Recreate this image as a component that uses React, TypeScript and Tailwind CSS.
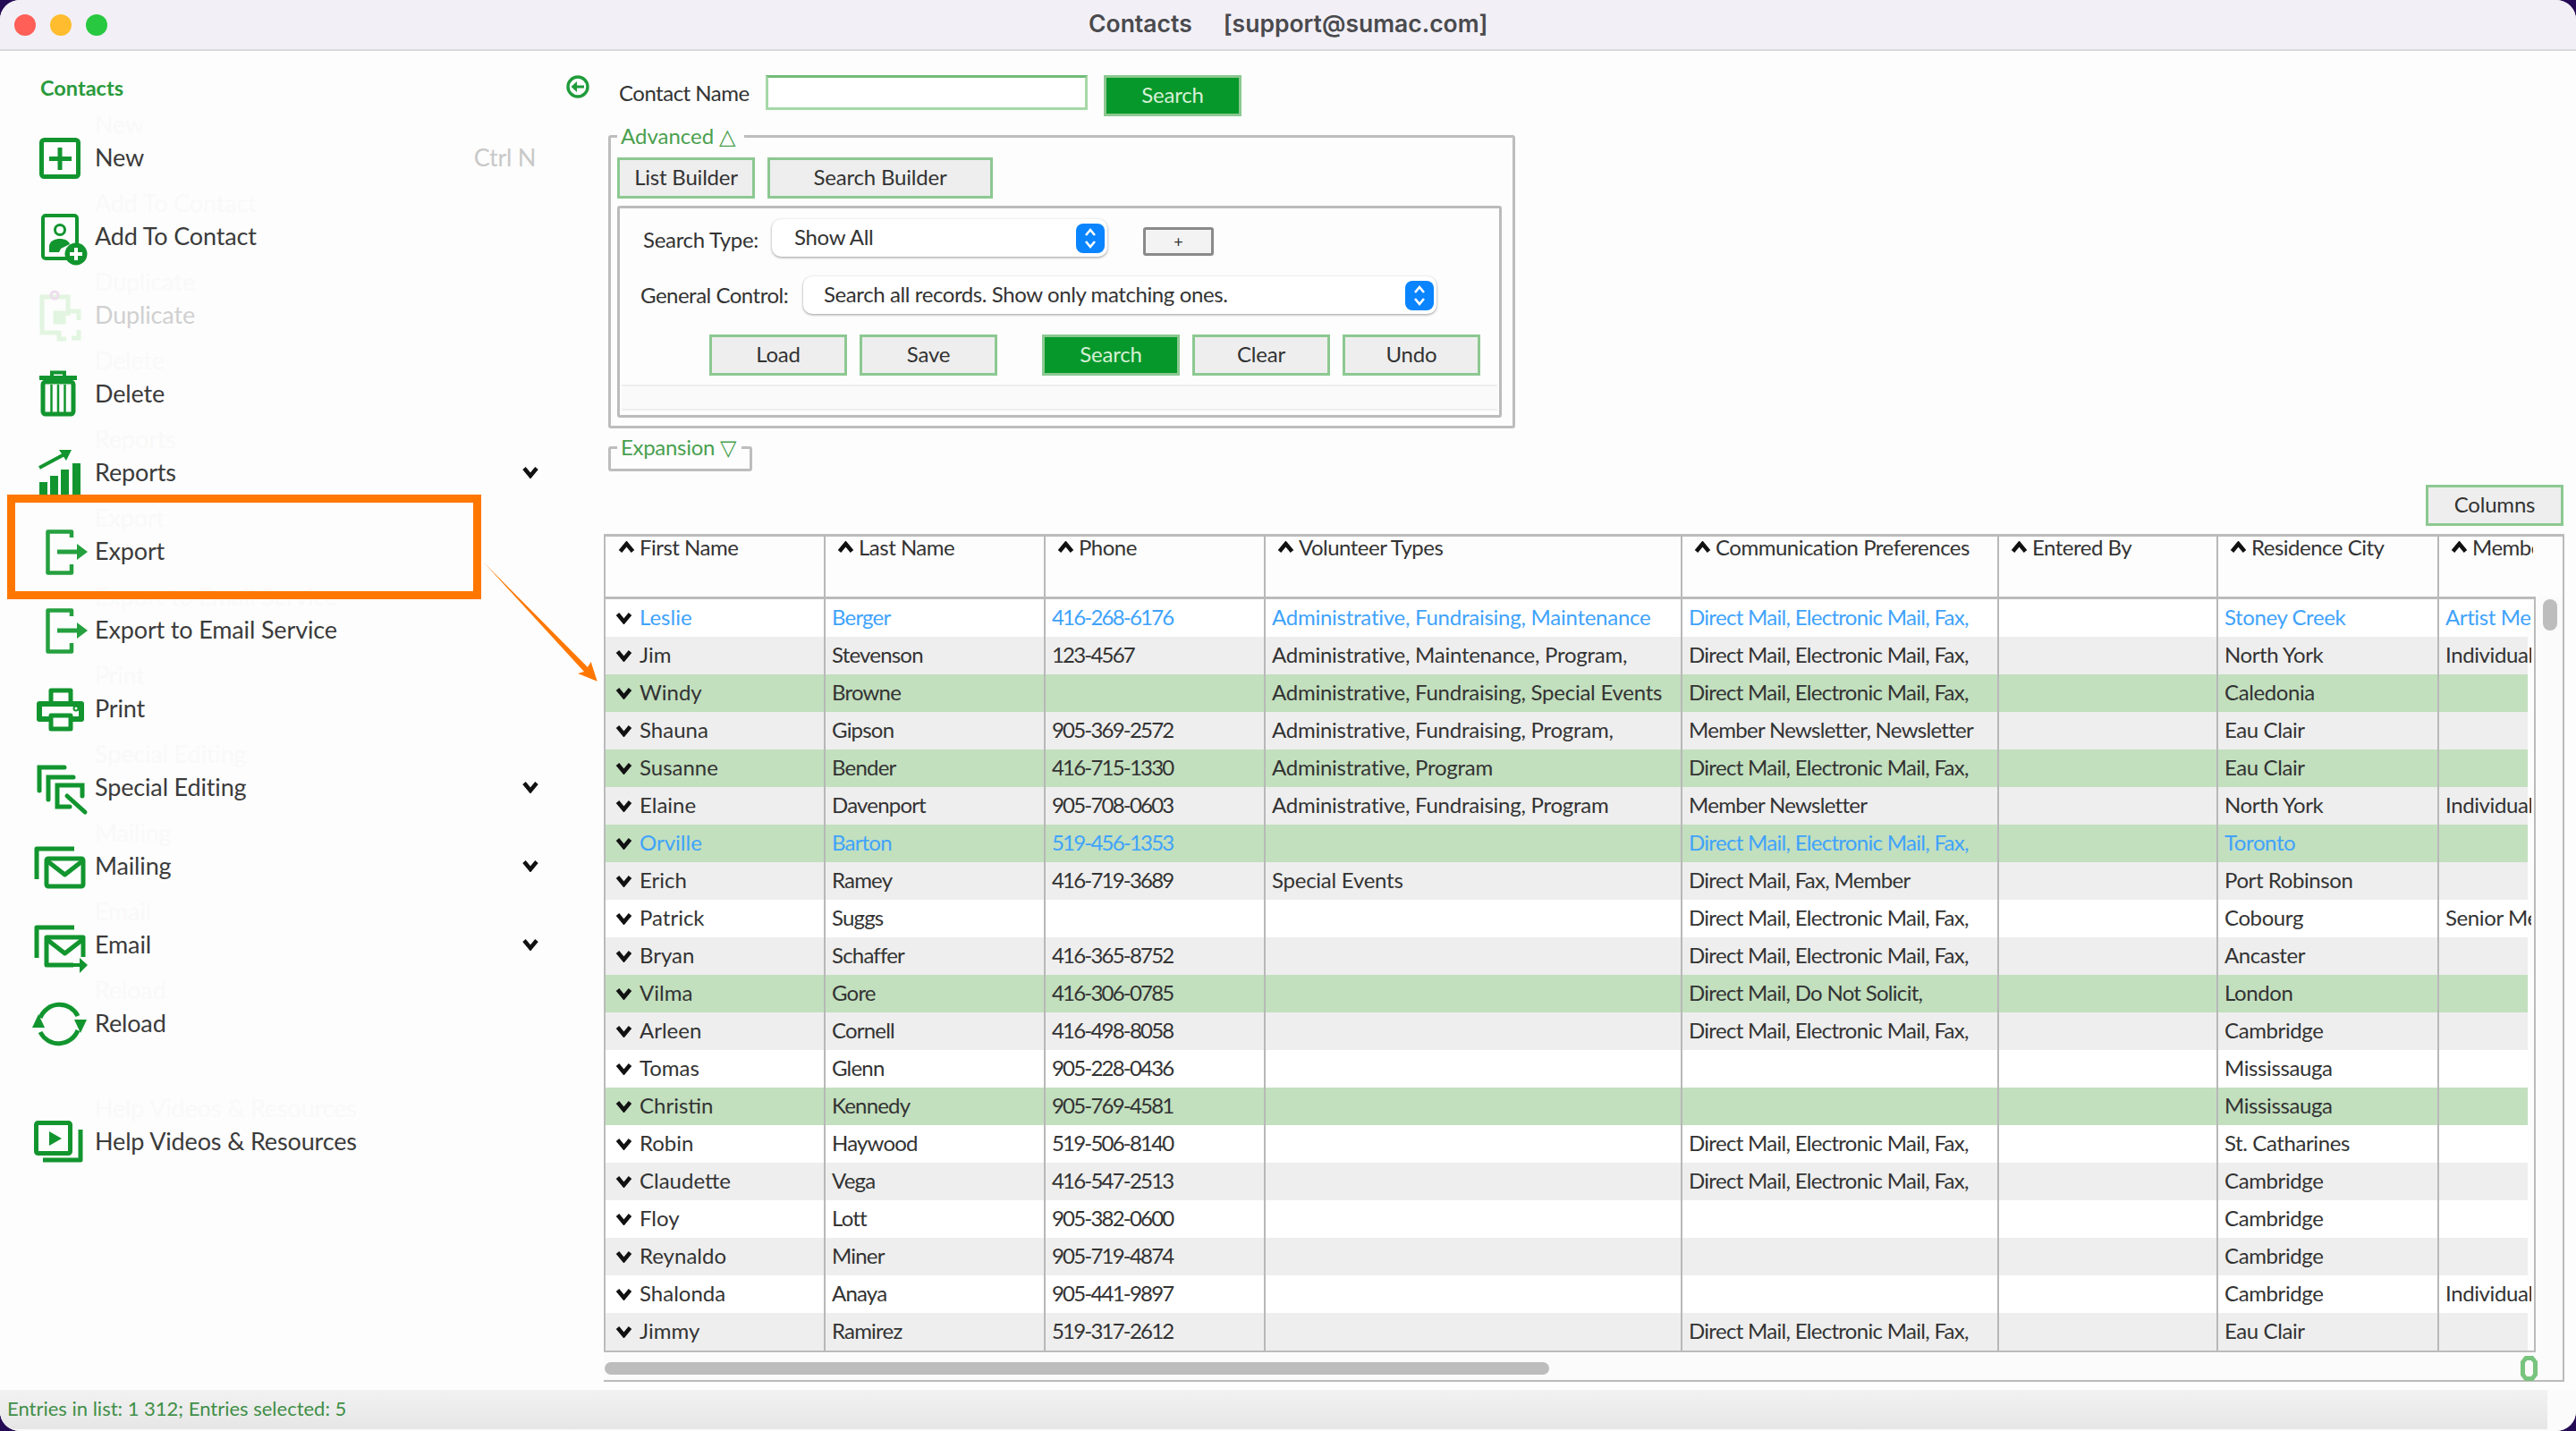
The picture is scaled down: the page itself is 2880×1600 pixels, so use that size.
import React from "react";

const G = "#12952f";
const L = "#25a03f";

const Chev = ({ cls = "w-[19px] h-[14px]" }: { cls?: string }) => (
  <svg viewBox="0 0 19 14" className={cls + " shrink-0"}>
    <path d="M2.5 2.5 L9.5 11 L16.5 2.5" fill="none" stroke="#111" strokeWidth="4.5" />
  </svg>
);
const ChevUp = () => (
  <svg viewBox="0 0 19 14" className="w-[19px] h-[14px] shrink-0">
    <path d="M2.5 11.5 L9.5 3 L16.5 11.5" fill="none" stroke="#111" strokeWidth="4.5" />
  </svg>
);

const Ico = ({ children }: { children: React.ReactNode }) => (
  <svg viewBox="0 0 100 64" className="w-[100px] h-[64px] shrink-0 overflow-visible">
    {children}
  </svg>
);

const icons: Record<string, React.ReactNode> = {
  New: (
    <g fill="none" stroke={G} strokeWidth="5">
      <rect x="46.5" y="12.5" width="41" height="41" rx="3" />
      <path d="M67 21v25M55 33.5h25" />
    </g>
  ),
  Add: (
    <g>
      <rect x="48" y="9" width="38" height="48" rx="3" fill="none" stroke={G} strokeWidth="4" />
      <circle cx="67" cy="25" r="5.5" fill="none" stroke={G} strokeWidth="3" />
      <path d="M55 50 V44 C55 37 62 35 67 35 C72 35 77 37 78 41 L68 46 L66 50 Z" fill={G} />
      <circle cx="85" cy="52" r="12.5" fill={G} />
      <path d="M85 45v14M78 52h14" stroke="#fff" strokeWidth="4" />
    </g>
  ),
  Dup: (
    <g fill="none" stroke="#e2f5e0" strokeWidth="5">
      <path d="M76 33 V12 H47 V52 H66" />
      <circle cx="61" cy="10" r="4" stroke="#eedded" strokeWidth="3" />
      <path d="M62 30 H71 V40 H62 Z" fill="#e2f5e0" />
      <path d="M78 28 H88 V38 M66 50 V59 H74 M88 49 V58 H80" />
    </g>
  ),
  Delete: (
    <g fill="none" stroke={G}>
      <path d="M44 14.5 H86" strokeWidth="5" />
      <path d="M58 13 V8.5 H72 V13" strokeWidth="4" />
      <rect x="48" y="19" width="34" height="36" rx="3" strokeWidth="5" />
      <path d="M57.5 22 V53 M65 22 V53 M72.5 22 V53" strokeWidth="2.5" />
    </g>
  ),
  Reports: (
    <g fill={G}>
      <rect x="44" y="43" width="9" height="20" />
      <rect x="56" y="36" width="9" height="27" />
      <rect x="68" y="29" width="9" height="34" />
      <rect x="81" y="22" width="9" height="41" />
      <path d="M44 27 L72 12" stroke={G} strokeWidth="4" fill="none" />
      <path d="M66 7 L80 7 L74 19 Z" />
    </g>
  ),
  Export: (
    <g fill="none" stroke={L} strokeWidth="4.5" strokeLinejoin="round">
      <path d="M80 17 V10.5 H53.5 V56.5 H80 V47" />
      <path d="M64 33 H88" strokeWidth="5" />
      <path d="M86 24 L98 33 L86 42 Z" fill={L} stroke="none" />
    </g>
  ),
  Print: (
    <g fill="none" stroke={G} strokeWidth="5" strokeLinejoin="round">
      <path d="M55 44 H44 V27 H91 V44 H80" strokeWidth="6" />
      <path d="M57 26 V12 H79 V26" />
      <rect x="57" y="40" width="22" height="15" />
      <circle cx="85" cy="32" r="1" />
    </g>
  ),
  Special: (
    <g fill="none" stroke={G} strokeWidth="5" strokeLinecap="round">
      <path d="M72 10 H44 V36" />
      <path d="M82 21 H54 V46" />
      <path d="M92 42 V30 H64 V54 H78" />
      <path d="M75 42 L95 60" strokeWidth="5" />
    </g>
  ),
  Mailing: (
    <g fill="none" stroke={G} strokeWidth="5" strokeLinejoin="round">
      <path d="M83 13 H41 V47" />
      <rect x="52" y="24" width="41" height="31" rx="2" />
      <path d="M52 26 L72.5 42 L93 26" />
    </g>
  ),
  Email: (
    <g fill="none" stroke={G} strokeWidth="5" strokeLinejoin="round">
      <path d="M83 13 H41 V47" />
      <path d="M82 55 H52 V24 H93 V46" />
      <path d="M52 26 L72.5 42 L93 26" />
      <path d="M74 55 H90" strokeWidth="4" />
      <path d="M89 47 L98 55 L89 64 Z" fill={G} stroke="none" />
    </g>
  ),
  Reload: (
    <g fill="none" stroke={G} strokeWidth="5">
      <path d="M45 26 A23 23 0 0 1 87 24" />
      <path d="M87 40 A23 23 0 0 1 45 42" />
      <path d="M36 37 L43 22 L50 37 Z" fill={G} stroke="none" />
      <path d="M83 28 L97 28 L90 43 Z" fill={G} stroke="none" />
    </g>
  ),
  Help: (
    <g fill="none" stroke={G} strokeWidth="5" strokeLinejoin="round">
      <rect x="40.5" y="11.5" width="38" height="34" rx="2" />
      <path d="M55 21 L69 29 L55 37 Z" fill={G} stroke="none" />
      <path d="M90 19 V53 H48" strokeWidth="5" />
    </g>
  ),
};

type Item = { label: string; icon: string; shortcut?: string; more?: boolean; off?: boolean; cls?: string };
const items: Item[] = [
  { label: "New", icon: "New", shortcut: "Ctrl N" },
  { label: "Add To Contact", icon: "Add" },
  { label: "Duplicate", icon: "Dup", off: true },
  { label: "Delete", icon: "Delete" },
  { label: "Reports", icon: "Reports", more: true },
  { label: "Export", icon: "Export" },
  { label: "Export to Email Service", icon: "Export" },
  { label: "Print", icon: "Print" },
  { label: "Special Editing", icon: "Special", more: true },
  { label: "Mailing", icon: "Mailing", more: true },
  { label: "Email", icon: "Email", more: true },
  { label: "Reload", icon: "Reload" },
  { label: "Help Videos & Resources", icon: "Help", cls: "mt-[44px]" },
];

const Btn = ({ children, w, primary }: { children: React.ReactNode; w: string; primary?: boolean }) => (
  <button
    className={
      w +
      " h-[46px] pb-[3px] border-[3px] border-[#8cc891] text-[24px] leading-none tracking-[-0.2px] " +
      (primary ? "bg-[#07982b] text-[#d6f0d6]" : "bg-[#eeeeee] text-[#333333]")
    }
  >
    {children}
  </button>
);

const Stepper = () => (
  <span className="ml-auto w-[32px] h-[33px] rounded-[8px] bg-[#0a84ff] flex items-center justify-center shrink-0">
    <svg viewBox="0 0 32 33" className="w-[32px] h-[33px]">
      <path d="M11 13 L16 7 L21 13 M11 20 L16 26 L21 20" fill="none" stroke="#fff" strokeWidth="2.6" />
    </svg>
  </span>
);

const DM = "Direct Mail, Electronic Mail, Fax,";
const AC = "Administrative, ";
type Row = [string, string, string, string, string, string, string, "w" | "g" | "s", boolean?];
const rows: Row[] = [
  ["Leslie", "Berger", "416-268-6176", "Administrative, Fundraising, Maintenance", DM, "Stoney Creek", "Artist Member", "w", true],
  ["Jim", "Stevenson", "123-4567", AC + "Maintenance, Program,", DM, "North York", "Individual", "g"],
  ["Windy", "Browne", "", AC + "Fundraising, Special Events", DM, "Caledonia", "", "s"],
  ["Shauna", "Gipson", "905-369-2572", AC + "Fundraising, Program,", "Member Newsletter, Newsletter", "Eau Clair", "", "g"],
  ["Susanne", "Bender", "416-715-1330", AC + "Program", DM, "Eau Clair", "", "s"],
  ["Elaine", "Davenport", "905-708-0603", AC + "Fundraising, Program", "Member Newsletter", "North York", "Individual", "g"],
  ["Orville", "Barton", "519-456-1353", "", DM, "Toronto", "", "s", true],
  ["Erich", "Ramey", "416-719-3689", "Special Events", "Direct Mail, Fax, Member", "Port Robinson", "", "g"],
  ["Patrick", "Suggs", "", "", DM, "Cobourg", "Senior Member", "w"],
  ["Bryan", "Schaffer", "416-365-8752", "", DM, "Ancaster", "", "g"],
  ["Vilma", "Gore", "416-306-0785", "", "Direct Mail, Do Not Solicit,", "London", "", "s"],
  ["Arleen", "Cornell", "416-498-8058", "", DM, "Cambridge", "", "g"],
  ["Tomas", "Glenn", "905-228-0436", "", "", "Mississauga", "", "w"],
  ["Christin", "Kennedy", "905-769-4581", "", "", "Mississauga", "", "s"],
  ["Robin", "Haywood", "519-506-8140", "", DM, "St. Catharines", "", "w"],
  ["Claudette", "Vega", "416-547-2513", "", DM, "Cambridge", "", "g"],
  ["Floy", "Lott", "905-382-0600", "", "", "Cambridge", "", "w"],
  ["Reynaldo", "Miner", "905-719-4874", "", "", "Cambridge", "", "g"],
  ["Shalonda", "Anaya", "905-441-9897", "", "", "Cambridge", "Individual", "w"],
  ["Jimmy", "Ramirez", "519-317-2612", "", DM, "Eau Clair", "", "g"],
];

const colTrack = [
  "tracking-[-0.8px]",
  "tracking-[-1.8px]",
  "tracking-[-0.25px]",
  "tracking-[-0.7px]",
  "",
  "tracking-[-0.4px]",
  "tracking-[-0.4px]",
];

const heads = ["First Name", "Last Name", "Phone", "Volunteer Types", "Communication Preferences", "Entered By", "Residence City", "Member Type"];
const headCols = "grid grid-cols-[244px_246px_246px_466px_354px_245px_247px_142px]";
const bodyCols = "grid grid-cols-[244px_246px_246px_466px_354px_245px_247px_105px]";

export default function App() {
  return (
    <div className="w-[2880px] h-[1600px] bg-[#250a55] [font-family:Lato,'Liberation_Sans',sans-serif]">
      <div className="relative w-full h-full rounded-[22px] overflow-hidden bg-[#fdfdfd] flex flex-col">
        {/* title bar */}
        <div className="h-[57px] shrink-0 bg-[#f2f0f6] border-b-[2px] border-[#d9d8dc] flex items-center relative">
          <div className="flex gap-[16px] ml-[16px]">
            <span className="w-[24px] h-[24px] rounded-full bg-[#ff5f57]" />
            <span className="w-[24px] h-[24px] rounded-full bg-[#febc2e]" />
            <span className="w-[24px] h-[24px] rounded-full bg-[#28c840]" />
          </div>
          <div className="ml-[1097px] mt-[-2px] flex gap-[35px] text-[26.5px] font-semibold text-[#4a4a4e] [font-family:Inter,sans-serif]">
            <span>Contacts</span>
            <span>[support@sumac.com]</span>
          </div>
        </div>

        <div className="flex flex-1 min-h-0">
          {/* sidebar */}
          <aside className="w-[620px] shrink-0 flex flex-col">
            <div className="pl-[45px] mt-[29px] h-[24px] leading-[24px] text-[23.5px] font-bold text-[#2a9a3c]">Contacts</div>
            <nav className="mt-[22px] flex flex-col">
              {items.map((it) => (
                <div key={it.label} className={"h-[88px] flex items-center " + (it.cls ?? "")}>
                  <Ico>{icons[it.icon]}</Ico>
                  <span className="relative ml-[6px] tracking-[-0.15px]">
                    <span
                      className={
                        "text-[27px] leading-[32px] " + (it.off ? "text-[#d0d0d0]" : "text-[#3b3b3b]")
                      }
                    >
                      {it.label}
                    </span>
                    <span className="absolute left-0 top-[-37px] whitespace-nowrap text-[27px] leading-[32px] text-[#f9f9f9]">
                      {it.label}
                    </span>
                  </span>
                  {it.shortcut && <span className="ml-auto mr-[21px] text-[27px] text-[#c8c8c8] tracking-[-0.3px]">{it.shortcut}</span>}
                  {it.more && (
                    <span className="ml-auto mr-[17px]">
                      <Chev cls="w-[20px] h-[14px]" />
                    </span>
                  )}
                </div>
              ))}
            </nav>
          </aside>

          {/* main */}
          <main className="flex-1 min-w-0 flex flex-col">
            <div className="flex items-start mt-[27px] h-[45px] pl-[13px]">
              <svg viewBox="0 0 26 26" className="w-[26px] h-[26px] shrink-0">
                <circle cx="13" cy="13" r="11" fill="none" stroke="#1f9c3a" strokeWidth="3.4" />
                <path d="M20 13 H11" stroke="#1f9c3a" strokeWidth="3" />
                <path d="M12 7 L5.5 13 L12 19 Z" fill="#1f9c3a" />
              </svg>
              <span className="ml-[33px] mt-[6px] w-[152px] text-[24px] leading-[28px] text-[#333333] tracking-[-0.5px] whitespace-nowrap">Contact Name</span>
              <input className="ml-[12px] w-[360px] h-[39px] border-[3px] border-[#a6d8a8] border-t-[#72bb78] bg-white" />
              <div className="ml-[18px]">
                <Btn w="w-[154px]" primary>
                  Search
                </Btn>
              </div>
            </div>

            <fieldset className="ml-[60px] mt-[9px] w-[1014px] h-[341px] border-[3px] border-[#bdbdbd] rounded-[3px] px-[7px]">
              <legend className="pl-[4px] pr-[10px] h-[28px] leading-[28px] text-[24px] text-[#4aa04f]">Advanced △</legend>
              <div className="flex gap-[14px] mt-[10px]">
                <Btn w="w-[154px]">List Builder</Btn>
                <Btn w="w-[252px]">Search Builder</Btn>
              </div>
              <div className="mt-[8px] w-[989px] h-[237px] border-[3px] border-[#bbbbbb] rounded-[3px] flex flex-col">
                <div className="flex items-start mt-[12px] text-[24px] text-[#333333]">
                  <span className="ml-[26px] w-[144px] mt-[9px] leading-[28px] tracking-[-0.3px] whitespace-nowrap">Search Type:</span>
                  <div className="w-[375px] h-[42px] rounded-[10px] bg-white shadow-[0_1px_3px_rgba(0,0,0,0.4)] flex items-center pl-[25px] pr-[3px] tracking-[-0.3px]">
                    <span className="mt-[-3px]">Show All</span>
                    <Stepper />
                  </div>
                  <div className="ml-[40px] mt-[9px] w-[79px] h-[32px] border-[3px] border-[#8a8a8a] rounded-[3px] bg-[#f3f3f3] flex items-center justify-center text-[18px] leading-none">
                    +
                  </div>
                </div>
                <div className="flex items-start mt-[22px] text-[24px] text-[#333333]">
                  <span className="ml-[23px] w-[182px] mt-[7px] leading-[28px] tracking-[-0.5px] whitespace-nowrap">General Control:</span>
                  <div className="w-[708px] h-[42px] rounded-[10px] bg-white shadow-[0_1px_3px_rgba(0,0,0,0.4)] flex items-center pl-[23px] pr-[3px] tracking-[-0.4px]">
                    <span className="mt-[-2px]">Search all records. Show only matching ones.</span>
                    <Stepper />
                  </div>
                </div>
                <div className="flex mt-[23px] ml-[100px]">
                  <Btn w="w-[154px]">Load</Btn>
                  <span className="w-[14px]" />
                  <Btn w="w-[154px]">Save</Btn>
                  <span className="w-[50px]" />
                  <Btn w="w-[154px]" primary>
                    Search
                  </Btn>
                  <span className="w-[14px]" />
                  <Btn w="w-[154px]">Clear</Btn>
                  <span className="w-[14px]" />
                  <Btn w="w-[154px]">Undo</Btn>
                </div>
                <div className="mt-[10px] mx-[2px] h-[29px] bg-[#fafafa] border-y-[2px] border-[#eeeeee]" />
              </div>
            </fieldset>

            <fieldset className="ml-[60px] mt-[7px] w-[161px] h-[41px] border-[3px] border-[#bdbdbd] rounded-[3px]">
              <legend className="ml-[7px] pl-[4px] pr-[6px] h-[28px] leading-[28px] text-[24px] tracking-[-0.3px] text-[#4aa04f]">Expansion ▽</legend>
            </fieldset>

            <div className="flex justify-end mt-[15px] pr-[14px]">
              <Btn w="w-[154px]">Columns</Btn>
            </div>

            {/* table */}
            <div className="ml-[55px] mt-[9px] w-[2192px] flex flex-col text-[24px] text-[#333333]">
              <div className={headCols + " h-[70px] border-t-[3px] border-x-[2px] border-[#bbbbbb] tracking-[-0.5px]"}>
                {heads.map((h, i) => (
                  <div key={h} className={"flex items-start gap-[5px] whitespace-nowrap " + (i ? "pl-[13px] border-l-[2px] border-[#b8b8b8]" : "pl-[14px]")}>
                    <span className="mt-[5px]">
                      <ChevUp />
                    </span>
                    <span className={"leading-[28px] mt-[-2px] " + (i === 7 ? "w-[68px] overflow-hidden" : "")}>{h}</span>
                  </div>
                ))}
              </div>
              <div className="flex">
                <div className="w-[2160px] border-t-[3px] border-b-[2px] border-x-[2px] border-[#bbbbbb]">
                  {rows.map((r) => (
                    <div key={r[0]} className={"relative h-[42px] " + (r[8] ? "text-[#3fa3fb]" : "")}>
                      <div
                        className={
                          "absolute left-0 top-0 bottom-0 w-[2149px] " +
                          (r[7] === "g" ? "bg-[#eeeeee]" : r[7] === "s" ? "bg-[#c2dfbe]" : "bg-white")
                        }
                      />
                      <div className={"relative h-full leading-[40px] whitespace-nowrap " + bodyCols}>
                        <div className="flex items-center pl-[11px] gap-[8px]">
                          <Chev />
                          <span className="mb-[2px]">{r[0]}</span>
                        </div>
                        {[r[1], r[2], r[3], r[4], "", r[5], r[6]].map((c, i) => (
                          <div key={i} className={"border-l-[2px] border-[#b8b8b8] pl-[7px] overflow-hidden " + colTrack[i]}>
                            {c}
                          </div>
                        ))}
                      </div>
                    </div>
                  ))}
                </div>
                <div className="w-[32px] bg-[#fbfbfb] border-r-[2px] border-[#bbbbbb] pl-[8px] pt-[3px]">
                  <div className="w-[16px] h-[35px] rounded-full bg-[#bdbdbd]" />
                </div>
              </div>
              <div className="h-[33px] bg-[#fbfbfb] border-b-[2px] border-r-[2px] border-[#bbbbbb] flex items-center justify-between pl-[1px]">
                <div className="w-[1056px] h-[14px] mt-[5px] rounded-full bg-[#bdbdbd]" />
                <svg viewBox="0 0 19 28" className="w-[19px] h-[28px] mt-[5px] mr-[28px] shrink-0">
                  <path d="M6 2.5 H13 L16.5 7 V21 L13 25.5 H6 L2.5 21 V7 Z" fill="#fbfbfb" stroke="#78c47e" strokeWidth="5" />
                </svg>
              </div>
            </div>
          </main>
        </div>

        {/* status bar */}
        <div className="h-[46px] shrink-0 bg-[#fbfbfb]">
          <div className="w-[2848px] h-[44px] bg-gradient-to-b from-[#f2f2f2] to-[#e6e6e6] pl-[8px] pb-[4px] flex items-center">
            <span className="text-[22px] text-[#3f8f47]">Entries in list: 1 312; Entries selected: 5</span>
          </div>
        </div>

        {/* highlight annotation */}
        <div className="absolute left-[8px] top-[553px] w-[530px] h-[117px] border-[9px] border-[#ff7700]" />
        <svg viewBox="530 620 160 160" className="absolute left-[530px] top-[620px] w-[160px] h-[160px]">
          <path d="M541 629 L657 746 L660.7 740 L667.7 761.7 L646 753 L653 751 Z" fill="#ff7700" />
        </svg>
      </div>
    </div>
  );
}
